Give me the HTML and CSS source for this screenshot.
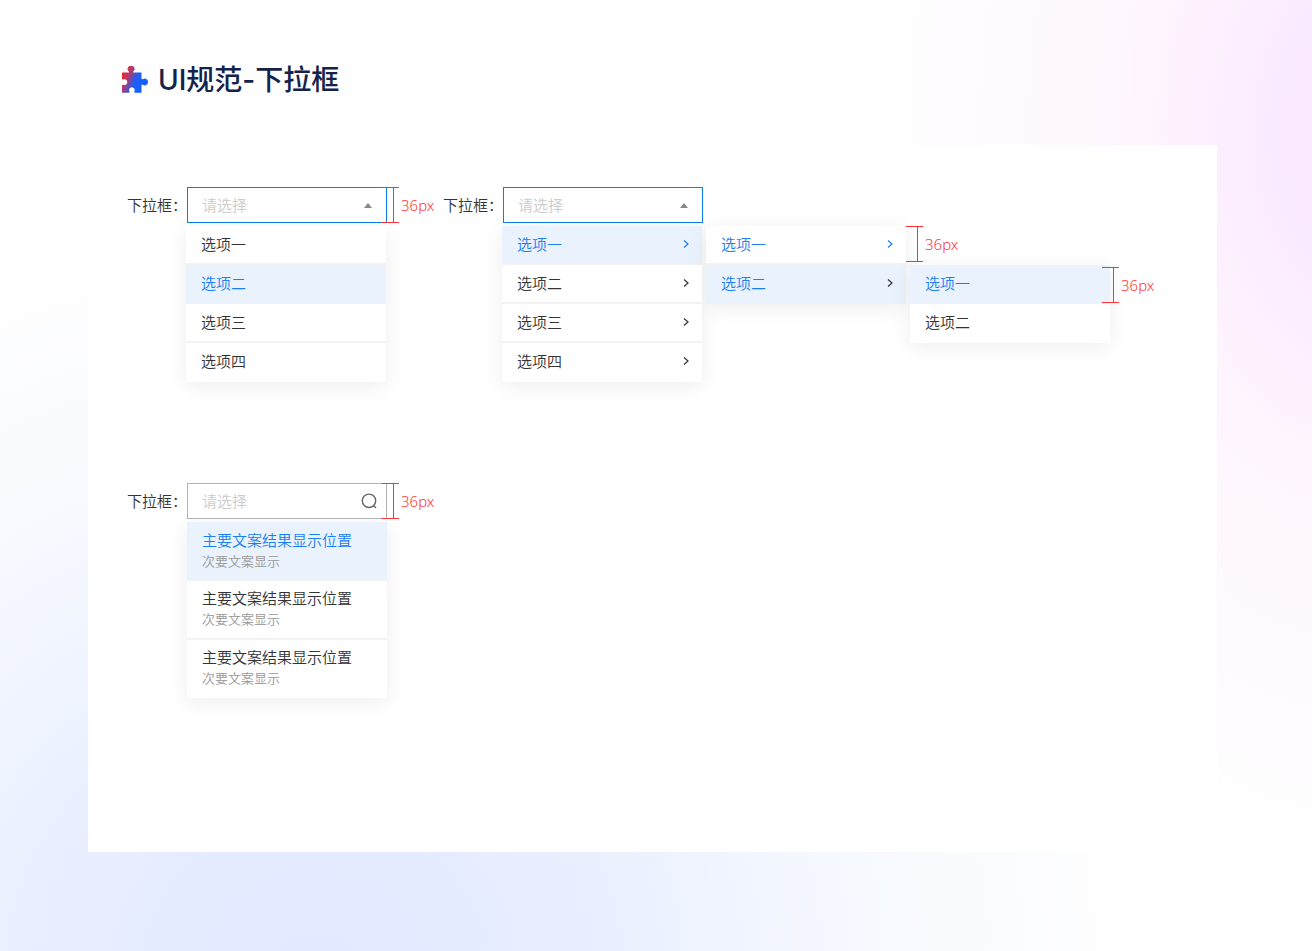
FILE: index.html
```html
<!DOCTYPE html>
<html lang="zh-CN">

<head>
    <meta charset="utf-8">
    <title>UI规范-下拉框</title>
    <link rel="stylesheet" href="styles.css">
</head>

<body>
    <header class="page-header">
        <svg class="logo" width="28" height="28" viewBox="0 0 28 28" aria-hidden="true">
            <defs>
                <linearGradient id="logoFill" x1="0" y1="0.3" x2="0.65" y2="0.6">
                    <stop offset="0" stop-color="#f0262f"></stop>
                    <stop offset="0.35" stop-color="#b83a68"></stop>
                    <stop offset="0.75" stop-color="#2b5be8"></stop>
                    <stop offset="1" stop-color="#1760ff"></stop>
                </linearGradient>
            </defs>
            <path fill="url(#logoFill)" d="M1 6.5H7.6C8.4 6.5 8.3 5.9 7.6 5.2A3.4 3.4 0 1 1 12.6 5.2C11.9 5.9 11.8 6.5 12.6 6.5H20.5V12.5C20.5 13.4 21.2 13.5 22 13A3.4 3.4 0 1 1 22 18.9C21.2 18.4 20.5 18.5 20.5 19.4V26.7H14.3C13.2 26.7 12.8 26.3 13.3 25.5A2.8 2.8 0 1 0 8.5 25.5C9 26.3 8.6 26.7 7.5 26.7H1V19.8C1 18.9 1.6 18.6 2.5 18.9A2.9 2.9 0 1 0 2.5 13.4C1.6 13.7 1 13.4 1 12.5Z"></path>
        </svg>
        <h1>UI规范-下拉框</h1>
    </header>

    <main class="panel">
        <div class="row">
            <div class="dropdown">
                <label for="basic">下拉框：</label>
                <div class="control">
                    <div class="box">
                        <select id="basic">
                            <option>请选择</option>
                        </select>
                        <span class="caret"></span>
                        <div class="ruler"><i></i>36px</div>
                    </div>
                    <ul class="menu">
                        <li><button type="button" class="option">选项一</button></li>
                        <li><button type="button" class="option active plain">选项二</button></li>
                        <li><button type="button" class="option">选项三</button></li>
                        <li><button type="button" class="option">选项四</button></li>
                    </ul>
                </div>
            </div>

            <div class="dropdown">
                <label for="cascade">下拉框：</label>
                <div class="control">
                    <div class="box">
                        <select id="cascade">
                            <option>请选择</option>
                        </select>
                        <span class="caret"></span>
                    </div>
                    <ul class="menu">
                        <li>
                            <button type="button" class="option active">选项一<svg class="arrow" viewBox="0 0 6 8"><path d="M1 0.5L5 4L1 7.5"></path></svg></button>
                            <ul class="menu submenu">
                                <li>
                                    <button type="button" class="option current">选项一<svg class="arrow" viewBox="0 0 6 8"><path d="M1 0.5L5 4L1 7.5"></path></svg></button>
                                    <div class="ruler outside"><i></i>36px</div>
                                </li>
                                <li>
                                    <button type="button" class="option active plain">选项二<svg class="arrow dark" viewBox="0 0 6 8"><path d="M1 0.5L5 4L1 7.5"></path></svg></button>
                                    <ul class="menu submenu">
                                        <li>
                                            <button type="button" class="option active">选项一</button>
                                            <div class="ruler inside"><i></i>36px</div>
                                        </li>
                                        <li><button type="button" class="option">选项二</button></li>
                                    </ul>
                                </li>
                            </ul>
                        </li>
                        <li><button type="button" class="option">选项二<svg class="arrow" viewBox="0 0 6 8"><path d="M1 0.5L5 4L1 7.5"></path></svg></button></li>
                        <li><button type="button" class="option">选项三<svg class="arrow" viewBox="0 0 6 8"><path d="M1 0.5L5 4L1 7.5"></path></svg></button></li>
                        <li><button type="button" class="option">选项四<svg class="arrow" viewBox="0 0 6 8"><path d="M1 0.5L5 4L1 7.5"></path></svg></button></li>
                    </ul>
                </div>
            </div>
        </div>

        <div class="row">
            <div class="dropdown">
                <label for="search">下拉框：</label>
                <div class="control">
                    <div class="box">
                        <input type="text" id="search" placeholder="请选择">
                        <svg class="search-icon" viewBox="0 0 16 16" aria-hidden="true">
                            <circle cx="8" cy="7.8" r="6.7"></circle>
                            <path d="M12.2 12.2L15 15"></path>
                        </svg>
                        <div class="ruler"><i></i>36px</div>
                    </div>
                    <ul class="menu results">
                        <li><button type="button" class="option active">主要文案结果显示位置<small>次要文案显示</small></button></li>
                        <li><button type="button" class="option">主要文案结果显示位置<small>次要文案显示</small></button></li>
                        <li><button type="button" class="option">主要文案结果显示位置<small>次要文案显示</small></button></li>
                    </ul>
                </div>
            </div>
        </div>
    </main>
</body>

</html>
```

FILE: styles.css
```css
* {
    box-sizing: border-box;
}

body {
    display: flex;
    flex-direction: column;
    min-height: 100vh;
    margin: 0;
    padding: 60px 95px 99px 88px;
    font-family: "Noto Sans", "Noto Sans CJK SC", sans-serif;
    font-size: 15px;
    font-weight: 350;
    color: #333;
    background:
        radial-gradient(ellipse 480px 700px at 105% 14%, #f9e6ff 0%, #fbebff 25%, #fef5fe 48%, rgba(255, 255, 255, 0) 100%),
        radial-gradient(ellipse 800px 720px at 24% 102%, #e2e8ff 0%, #e9efff 35%, #f5f8ff 65%, rgba(255, 255, 255, 0) 100%),
        #fefefe;
}

.page-header {
    display: flex;
    align-items: center;
    gap: 9px;
    height: 40px;
    margin-bottom: 45px;
    padding-left: 33px;
}

h1 {
    margin: 0;
    font-family: Inter, "Noto Sans CJK SC", sans-serif;
    font-size: 28px;
    font-weight: 500;
    line-height: 40px;
    color: #14234b;
}

.panel {
    flex: 1;
    display: flex;
    flex-direction: column;
    gap: 101px;
    padding: 42px 39px;
    background: #fff;
}

.row {
    display: flex;
    gap: 56px;
}

.dropdown {
    display: flex;
}

label {
    width: 60px;
    line-height: 36px;
    white-space: nowrap;
}

.control {
    width: 200px;
}

.box {
    position: relative;
}

select,
input {
    display: block;
    width: 100%;
    height: 36px;
    margin: 0;
    padding: 0 14px;
    border: 1px solid #0a7fe6;
    border-radius: 0;
    background: #fff;
    font: inherit;
    color: #ccc;
    appearance: none;
}

input {
    border-color: #b3b3b3;
}

input::placeholder {
    color: #ccc;
}

.caret {
    position: absolute;
    top: 16px;
    right: 15px;
    border: 4px solid transparent;
    border-top: 0;
    border-bottom: 5px solid #888;
}

.search-icon {
    position: absolute;
    top: 10px;
    right: 10px;
    width: 16px;
    height: 16px;
    fill: none;
    stroke: #666;
    stroke-width: 1.4;
}

.menu {
    width: 200px;
    margin: 3px 0 0 -1px;
    padding: 0;
    list-style: none;
    background: #fff;
    box-shadow: 0 4px 20px rgba(0, 0, 0, 0.07);
}

.menu li {
    position: relative;
}

.option {
    display: flex;
    align-items: center;
    justify-content: space-between;
    width: 100%;
    height: 39px;
    padding: 0 13px 1px 15px;
    border: 0;
    border-bottom: 2px solid #f2f2f2;
    background: #fff;
    font: inherit;
    line-height: 22px;
    color: #333;
    text-align: left;
    cursor: pointer;
}

li:last-child > .option {
    border-bottom-color: transparent;
}

.active,
.current {
    color: #1a80f0;
}

.active {
    padding-bottom: 2px;
    background: #eaf2fe;
    border-bottom-width: 1px;
}

.plain {
    border-bottom-color: transparent;
}

.arrow {
    width: 6px;
    height: 8px;
    fill: none;
    stroke: currentColor;
    stroke-width: 1.2;
}

.arrow.dark {
    color: #333;
}

.submenu {
    position: absolute;
    top: 0;
    left: 100%;
    margin: 0 0 0 4px;
}

/* size marks */
.ruler {
    position: absolute;
    top: 0;
    left: 195px;
    display: flex;
    gap: 2px;
    height: 36px;
    line-height: 36px;
    color: #f33;
}

.ruler i {
    width: 17px;
    border: solid #f33;
    border-width: 1px 0;
    background: linear-gradient(#f33, #f33) 11px 0 / 1px 100% no-repeat;
}

.ruler.outside {
    left: 200px;
}

.ruler.inside {
    top: 2px;
    left: 192px;
}

/* two-line search results */
.results {
    margin-left: 0;
}

.results .option {
    display: block;
    height: 59px;
    padding: 6px 15px 9px;
}

.results li:last-child .option {
    height: 58px;
}

small {
    display: block;
    font-size: 13px;
    line-height: 20px;
    color: #999;
}
```
